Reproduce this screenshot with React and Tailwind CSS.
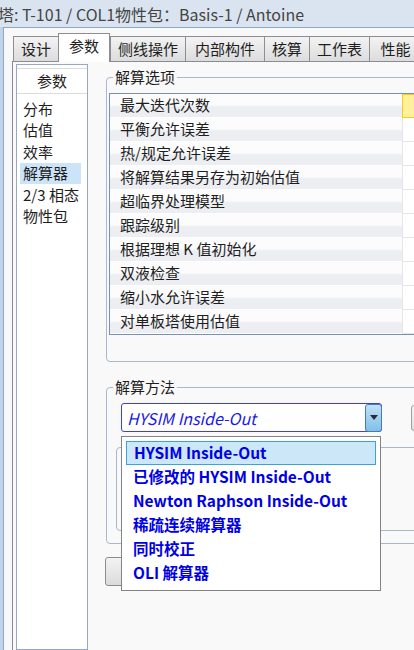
//
// COLUMN PROPERTIES - PARAMETERS / SOLVER
// =======================================
// Column window with the Parameters tab open on the Solver page and the
// solving-method combo box dropped down.
//
import React from "react";

const tabs = [
    { label: "设计", w: "w-[45px]" },
    { label: "参数", w: "w-[52px]", active: true },
    { label: "侧线操作", w: "w-[75px]" },
    { label: "内部构件", w: "w-[79px]" },
    { label: "核算", w: "w-[45px]" },
    { label: "工作表", w: "w-[60px]" },
    { label: "性能", w: "w-[52px]" },
];

const pages = ["分布", "估值", "效率", "解算器", "2/3 相态", "物性包"];

const options = [
    "最大迭代次数",
    "平衡允许误差",
    "热/规定允许误差",
    "将解算结果另存为初始估值",
    "超临界处理模型",
    "跟踪级别",
    "根据理想 K 值初始化",
    "双液检查",
    "缩小水允许误差",
    "对单板塔使用估值",
];

const methods = [
    "HYSIM Inside-Out",
    "已修改的 HYSIM Inside-Out",
    "Newton Raphson Inside-Out",
    "稀疏连续解算器",
    "同时校正",
    "OLI 解算器",
];

//
// App
// ===
function App() {
    return (
        <div className="w-[414px] h-[650px] overflow-hidden flex flex-col bg-[#dae4f0] font-['Noto_Sans_CJK_SC','Noto_Sans',sans-serif] text-[#1e1e1e]">

            {/* Title bar */}
            <div className="h-[27px] shrink-0 flex items-center -ml-[2px] text-[16px] text-[#444] whitespace-nowrap">
                塔: T-101 / COL1物性包：Basis-1 / Antoine
            </div>

            <div className="flex flex-1 min-h-0">
                <div className="w-[3px] shrink-0 bg-[#c2d4ea]"></div>

                <div className="flex-1 min-w-0 flex flex-col border-l border-t border-[#8fa7c6] bg-[#f8f8f8]">

                    {/* Tabs */}
                    <div className="h-[33px] shrink-0 flex items-end pl-[9px]">
                        {tabs.map((t) => (
                            t.active ? (
                                <div key={t.label}
                                     className={`${t.w} shrink-0 h-[29px] -mb-px z-10 flex items-center justify-center bg-white border-x border-t border-[#8c8e94] text-[15px] pb-[3px]`}>
                                    {t.label}
                                </div>
                            ) : (
                                <div key={t.label}
                                     className={`${t.w} shrink-0 h-[25px] flex items-center justify-center border-l border-t border-[#8c8e94] bg-[linear-gradient(#f3f3f3,#dcdcdc)] text-[15px]`}>
                                    {t.label}
                                </div>
                            )
                        ))}
                    </div>

                    {/* Tab panel */}
                    <div className="flex-1 min-h-0 flex ml-[8px] border-l border-t border-[#898c95] bg-[#f9f9f9] pl-[3px] pt-[2px]">

                        {/* Page list */}
                        <div className="w-[72px] shrink-0 bg-white border border-[#97a9c2]">
                            <div className="mt-[3px] h-[26px] border-y border-[#dcdcdc] flex items-center justify-center text-[15px]">
                                参数
                            </div>
                            <div className="pt-[4px] pl-[3px]">
                                {pages.map((p) => (
                                    <div key={p}
                                         className={`h-[21.5px] flex items-center pl-[3px] text-[15px] whitespace-nowrap ${p === "解算器" ? "w-[61px] bg-[#cce4f7]" : ""}`}>
                                        {p}
                                    </div>
                                ))}
                            </div>
                        </div>

                        {/* Right column */}
                        <div className="w-[330px] shrink-0 ml-[18px] flex flex-col">

                            <fieldset className="mt-[4px] border border-[#a9b8cc] rounded-[4px] pb-[26px]">
                                <legend className="ml-[6px] px-[2px] text-[15px] leading-[18px]">解算选项</legend>
                                <div className="mt-[7px] ml-[2px] border-l border-t border-b border-[#7890b2] bg-white">
                                    {options.map((o, i) => (
                                        <div key={o} className="h-[24px] flex bg-[linear-gradient(#fcfcfd_0%,#fbfbfc_45%,#eceef2_55%,#eceef2_100%)]">
                                            <div className="w-[292px] shrink-0 flex items-center pl-[10px] text-[15px] whitespace-nowrap border-b border-white">
                                                {o}
                                            </div>
                                            <div className={`flex-1 ${i === 0 ? "bg-[#fff09e] border border-[#f3cf16]" : "bg-white border-l border-b border-[#e4e6ea]"}`}></div>
                                        </div>
                                    ))}
                                </div>
                            </fieldset>

                            <fieldset className="mt-[16px] border border-[#a9b8cc] rounded-[4px] pb-[12px]">
                                <legend className="ml-[6px] px-[2px] text-[15px] leading-[18px]">解算方法</legend>

                                <div className="mt-[7px] ml-[14px] flex items-center">
                                    <div className="relative">
                                        <div className="w-[261px] h-[29px] flex items-center rounded-[3px] border-[1.5px] border-[#3c3cf0] bg-white">
                                            <span className="flex-1 pl-[5px] italic text-[16px] text-[#1a1ae6] whitespace-nowrap">
                                                HYSIM Inside-Out
                                            </span>
                                            <div className="w-[17px] h-[28px] -mr-px flex items-center justify-center rounded-[3px] border border-[#4b7aa6] bg-[linear-gradient(#bfe1f7,#80c0ea)]">
                                                <div className="w-0 h-0 border-x-[4px] border-x-transparent border-t-[5px] border-t-[#2b2b2b]"></div>
                                            </div>
                                        </div>

                                        {/* Drop-down list */}
                                        <div className="absolute top-[33px] left-0 z-20 w-[260px] h-[155px] bg-white border border-[#838383] pt-[4px] px-[4px]">
                                            {methods.map((m, i) => (
                                                <div key={m}
                                                     className={`h-[24px] flex items-center pl-[7px] text-[15.5px] font-bold text-[#0000e6] whitespace-nowrap ${i === 0 ? "bg-[#cce8f8] border border-[#3aa3dd]" : ""}`}>
                                                    {m}
                                                </div>
                                            ))}
                                        </div>
                                    </div>
                                    <div className="ml-[29px] w-[60px] h-[26px] shrink-0 rounded-[3px] border border-[#a0a0a0] bg-[linear-gradient(#f4f4f4,#e1e1e1)]"></div>
                                </div>

                                <div className="mt-[15px] ml-[9px] h-[84px] border border-[#a9b8cc] rounded-[4px]"></div>
                            </fieldset>

                            <div className="mt-[13px] -ml-px w-[90px] h-[29px] rounded-[3px] border border-[#8c8c8c] bg-[linear-gradient(#f3f3f3,#dbdbdb)]"></div>
                        </div>
                    </div>
                </div>
            </div>
        </div>
    );
}
export default App
